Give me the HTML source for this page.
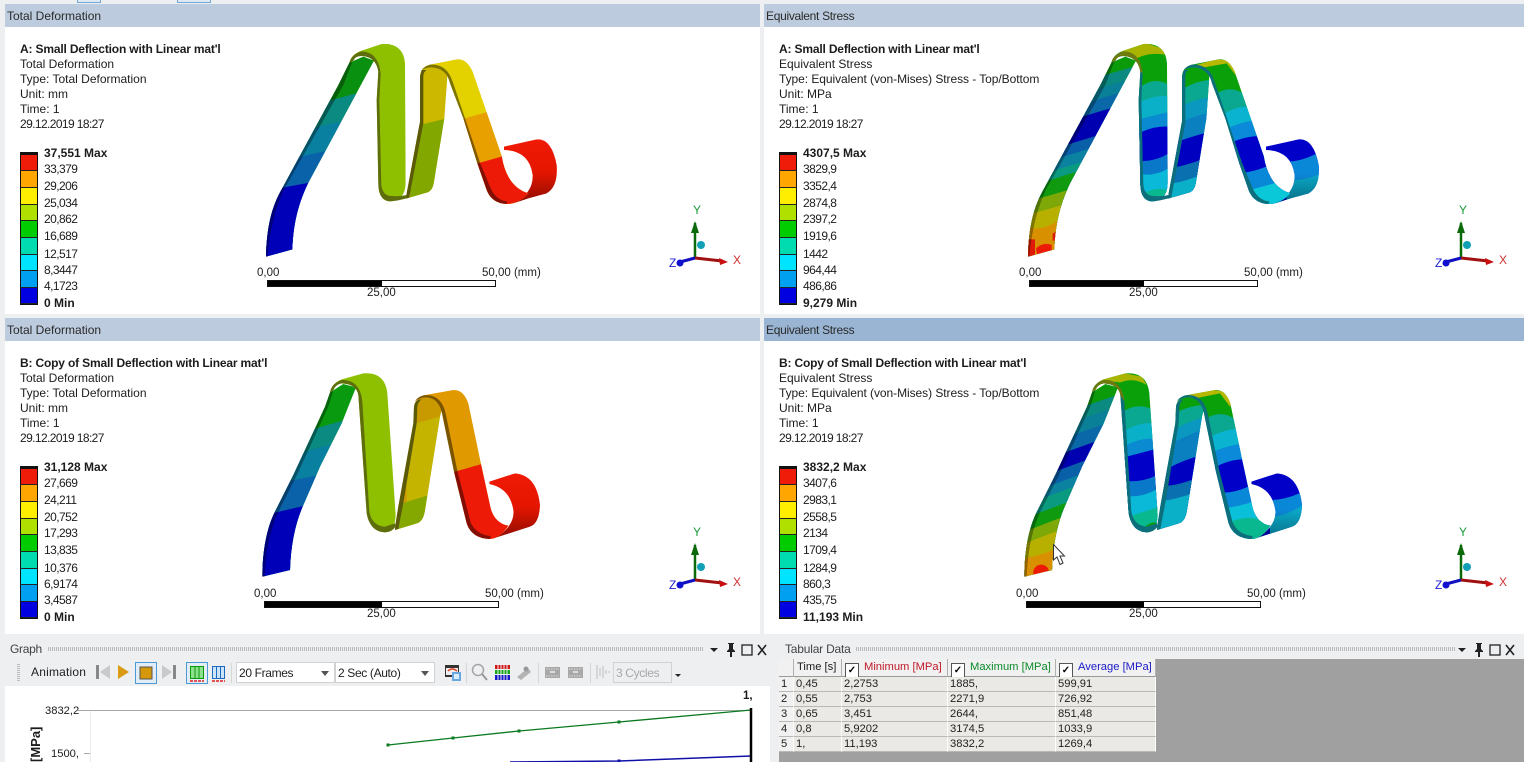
<!DOCTYPE html>
<html><head><meta charset="utf-8">
<style>
html,body{margin:0;padding:0}
body{width:1524px;height:762px;position:relative;overflow:hidden;background:#eeeff1;font-family:"Liberation Sans",sans-serif;color:#1c1c1c}
.a{position:absolute}
.t{position:absolute;white-space:nowrap;font-size:12px;line-height:15px}
.tb{position:absolute;height:23px;line-height:24px;font-size:12px;padding-left:2px;color:#2a2a2a;box-sizing:border-box}
.w{position:absolute;background:#fff}
.an{position:absolute;white-space:nowrap;font-size:12px;line-height:15px}
.an b{letter-spacing:-.17px}
.an u{text-decoration:none;letter-spacing:-.6px}
.an s{text-decoration:none;letter-spacing:-.06px}
.bar{position:absolute;width:16px;border:1px solid #111;border-width:3px 1px 1px;background:#111;box-sizing:content-box}
.bar i{display:block;border-bottom:1px solid #222;box-sizing:border-box}
.lb{position:absolute;font-size:12px;letter-spacing:-.55px;line-height:14px;white-space:nowrap;left:0}
.lb.k{font-weight:bold;font-size:12px;letter-spacing:0}
.sc{position:absolute;height:5px;border:1px solid #111;background:#fff}
.sc i{display:block;height:5px;width:50%;background:#000}
.s{position:absolute;font-size:11.5px;line-height:14px;white-space:nowrap}
svg{position:absolute;overflow:visible}
.cell{position:absolute;font-size:11.2px;line-height:15px;height:15px;white-space:nowrap;padding-left:2px;box-sizing:border-box;color:#222;background:#ebe9e5;border-right:1px solid #fff;border-bottom:1px solid #b9b9b4}
.h{position:absolute;font-size:11.2px;line-height:17px;height:18px;white-space:nowrap;box-sizing:border-box;background:#f1f1f1;border-right:1px solid #b0b0b0;border-bottom:1px solid #9a9a9a;text-align:left}
.cb{display:inline-block;width:12px;height:13px;border:1px solid #555;background:#fff;vertical-align:-3px;margin:0 5px 0 3px;font-size:10px;line-height:13px;text-align:center;color:#000;font-weight:bold}
.dd{position:absolute;top:662px;height:21px;background:#fff;border:1px solid #d2d2d2;box-sizing:border-box;font-size:12px;letter-spacing:-.35px;line-height:20px;padding-left:2px;color:#222}
.dd:after{content:"";position:absolute;right:5px;top:8px;border:4px solid transparent;border-top:5px solid #555}
</style></head><body>

<svg width="0" height="0" style="position:absolute"><defs>
<linearGradient id="rg" x1="0" y1="0" x2="0" y2="1"><stop offset="0" stop-color="#f01a06"/><stop offset=".5" stop-color="#e41600"/><stop offset="1" stop-color="#8a0c00"/></linearGradient>
<linearGradient id="rb" x1="0" y1="0" x2="0" y2="1"><stop offset="0" stop-color="#000"  stop-opacity="0"/><stop offset=".55" stop-color="#000" stop-opacity="0"/><stop offset="1" stop-color="#000" stop-opacity=".35"/></linearGradient>
<clipPath id="a1"><path d="M48 680C50 600 62 535 95 478L265 165 298 98 340 80 372 92 175 458C150 510 130 570 127 658Z"/></clipPath>
<clipPath id="a2"><path d="M298 98Q305 72 335 62L395 42Q460 38 465 100L467 460Q465 512 420 514Q385 512 385 460L380 210 385 125Q378 80 335 78Q315 78 310 92Z"/></clipPath>
<clipPath id="a3"><path d="M468 506L530 488Q548 484 552 455L583 265 592 140Q585 108 545 108Q510 110 510 140V275L470 490Z"/></clipPath>
<clipPath id="a4"><path d="M515 122Q520 110 540 104L620 88Q650 85 668 125L755 378Q770 470 835 490Q805 522 770 522Q725 520 710 480L682 400 640 265 600 160Q590 115 545 112Q525 112 515 122Z"/></clipPath>
<clipPath id="a5"><path d="M762 350L860 328Q905 325 920 405Q925 470 890 490L835 505 790 520Q850 490 848 435Q838 362 762 360Z"/></clipPath>
<path id="ea1" d="M48 680C50 600 62 535 95 478L265 165 298 98 308 92 280 165 104 475C75 535 60 600 52 680Z"/>
<path id="ea2" d="M298 98Q305 72 335 64Q385 66 392 130L388 210 394 465Q398 498 425 498Q450 500 470 495V505Q445 512 420 514Q385 512 385 460L380 210 385 125Q378 80 335 78Q315 78 310 92Z"/>
<path id="ea3" d="M510 140V275L470 490 468 506 478 503 480 490 520 280V140Q520 125 530 120H515Z"/>
<path id="ea4" d="M515 122Q520 110 540 104Q590 100 608 155L690 398 722 475Q740 512 772 514L770 522Q725 520 710 480L682 400 640 265 600 160Q590 115 545 112Q525 112 515 122Z"/>
<clipPath id="b1"><path d="M37 650C38 570 50 505 75 455L130 345 195 205 225 140 240 97 280 72 318 82 275 190 210 320 160 435C135 490 122 560 120 630Z"/></clipPath>
<clipPath id="b2"><path d="M240 97Q245 70 275 58L340 40Q405 35 412 100L437 465Q435 515 405 517Q360 515 350 460L325 105Q320 72 275 70Q258 72 250 90Z"/></clipPath>
<clipPath id="b3"><path d="M435 510L500 490Q520 485 525 450L570 170 575 150Q565 112 530 112Q495 112 492 140L490 190 445 440 437 490Z"/></clipPath>
<clipPath id="b4"><path d="M495 125Q500 112 520 106L610 90Q640 88 655 130L693 312 722 445Q735 490 775 497Q750 535 720 537Q665 535 650 490L612 335 578 170Q570 115 530 112Q508 112 495 125Z"/></clipPath>
<clipPath id="b5"><path d="M718 365L795 340Q860 345 870 435Q868 490 840 500L725 537 750 525Q795 490 790 450Q780 385 718 372Z"/></clipPath>
<path id="eb1" d="M37 650C38 570 50 505 75 455L130 345 195 205 225 140 240 97 250 92 235 140 205 205 140 347 85 455C60 510 48 570 44 650Z"/>
<path id="eb2" d="M240 97Q245 70 275 60Q330 58 337 125L358 455Q366 498 405 500L435 490 437 500Q425 517 405 517Q360 515 350 460L325 105Q320 72 275 70Q258 72 250 90Z"/>
<path id="eb3" d="M492 140L490 190 445 440 437 490 435 510 445 507 448 490 458 440 500 190 502 140Q504 125 515 118Q495 118 492 140Z"/>
<path id="eb4" d="M495 125Q500 112 520 106Q575 100 588 165L622 332 662 488Q680 525 722 528L720 537Q665 535 650 490L612 335 578 170Q570 115 530 112Q508 112 495 125Z"/>
</defs></svg>

<!-- top strip -->
<div class="a" style="left:77px;top:0;width:22px;height:2px;background:#dfe9f4;border:1px solid #6fa8d8;border-top:0"></div>
<div class="a" style="left:177px;top:0;width:32px;height:2px;background:#dfe9f4;border:1px solid #6fa8d8;border-top:0"></div>

<!-- panels -->
<div class="w" style="left:5px;top:27px;width:755px;height:287px"></div>
<div class="w" style="left:764px;top:27px;width:760px;height:287px"></div>
<div class="w" style="left:5px;top:341px;width:755px;height:293px"></div>
<div class="w" style="left:764px;top:341px;width:760px;height:293px"></div>
<div class="tb" style="left:5px;top:4px;width:755px;background:#bccbdd">Total Deformation</div>
<div class="tb" style="left:764px;top:4px;width:760px;background:#bccbdd;letter-spacing:-.3px">Equivalent Stress</div>
<div class="tb" style="left:5px;top:318px;width:755px;background:#bccbdd">Total Deformation</div>
<div class="tb" style="left:764px;top:318px;width:760px;background:#99b5d3;letter-spacing:-.3px">Equivalent Stress</div>

<!-- annotations -->
<div class="an" style="left:20px;top:42px"><b>A: Small Deflection with Linear mat'l</b><br>Total Deformation<br>Type: Total Deformation<br>Unit: mm<br>Time: 1<br><u>29.12.2019 18:27</u></div>
<div class="an" style="left:779px;top:42px"><b>A: Small Deflection with Linear mat'l</b><br>Equivalent Stress<br><s>Type: Equivalent (von-Mises) Stress - Top/Bottom</s><br>Unit: MPa<br>Time: 1<br><u>29.12.2019 18:27</u></div>
<div class="an" style="left:20px;top:356px"><b>B: Copy of Small Deflection with Linear mat'l</b><br>Total Deformation<br>Type: Total Deformation<br>Unit: mm<br>Time: 1<br><u>29.12.2019 18:27</u></div>
<div class="an" style="left:779px;top:356px"><b>B: Copy of Small Deflection with Linear mat'l</b><br>Equivalent Stress<br><s>Type: Equivalent (von-Mises) Stress - Top/Bottom</s><br>Unit: MPa<br>Time: 1<br><u>29.12.2019 18:27</u></div>

<!-- legend bars -->
<div class="bar" style="left:20px;top:152px"><i style="height:16px;background:#ee1c08"></i><i style="height:17px;background:#ffa600"></i><i style="height:17px;background:#ffee00"></i><i style="height:16px;background:#b0e000"></i><i style="height:17px;background:#00cc00"></i><i style="height:17px;background:#00dcb0"></i><i style="height:16px;background:#00e4ff"></i><i style="height:17px;background:#00a0f0"></i><i style="height:16px;background:#0000e0"></i></div>
<div class="bar" style="left:779px;top:152px"><i style="height:16px;background:#ee1c08"></i><i style="height:17px;background:#ffa600"></i><i style="height:17px;background:#ffee00"></i><i style="height:16px;background:#b0e000"></i><i style="height:17px;background:#00cc00"></i><i style="height:17px;background:#00dcb0"></i><i style="height:16px;background:#00e4ff"></i><i style="height:17px;background:#00a0f0"></i><i style="height:16px;background:#0000e0"></i></div>
<div class="bar" style="left:20px;top:466px"><i style="height:16px;background:#ee1c08"></i><i style="height:17px;background:#ffa600"></i><i style="height:17px;background:#ffee00"></i><i style="height:16px;background:#b0e000"></i><i style="height:17px;background:#00cc00"></i><i style="height:17px;background:#00dcb0"></i><i style="height:16px;background:#00e4ff"></i><i style="height:17px;background:#00a0f0"></i><i style="height:16px;background:#0000e0"></i></div>
<div class="bar" style="left:779px;top:466px"><i style="height:16px;background:#ee1c08"></i><i style="height:17px;background:#ffa600"></i><i style="height:17px;background:#ffee00"></i><i style="height:16px;background:#b0e000"></i><i style="height:17px;background:#00cc00"></i><i style="height:17px;background:#00dcb0"></i><i style="height:16px;background:#00e4ff"></i><i style="height:17px;background:#00a0f0"></i><i style="height:16px;background:#0000e0"></i></div>

<!-- legend labels -->
<div class="a" style="left:44px;top:146px">
<div class="lb k" style="top:0">37,551 Max</div><div class="lb" style="top:16px">33,379</div><div class="lb" style="top:33px">29,206</div><div class="lb" style="top:50px">25,034</div><div class="lb" style="top:66px">20,862</div><div class="lb" style="top:83px">16,689</div><div class="lb" style="top:101px">12,517</div><div class="lb" style="top:117px">8,3447</div><div class="lb" style="top:133px">4,1723</div><div class="lb k" style="top:150px">0 Min</div></div>
<div class="a" style="left:803px;top:146px">
<div class="lb k" style="top:0">4307,5 Max</div><div class="lb" style="top:16px">3829,9</div><div class="lb" style="top:33px">3352,4</div><div class="lb" style="top:50px">2874,8</div><div class="lb" style="top:66px">2397,2</div><div class="lb" style="top:83px">1919,6</div><div class="lb" style="top:101px">1442</div><div class="lb" style="top:117px">964,44</div><div class="lb" style="top:133px">486,86</div><div class="lb k" style="top:150px">9,279 Min</div></div>
<div class="a" style="left:44px;top:460px">
<div class="lb k" style="top:0">31,128 Max</div><div class="lb" style="top:16px">27,669</div><div class="lb" style="top:33px">24,211</div><div class="lb" style="top:50px">20,752</div><div class="lb" style="top:66px">17,293</div><div class="lb" style="top:83px">13,835</div><div class="lb" style="top:101px">10,376</div><div class="lb" style="top:117px">6,9174</div><div class="lb" style="top:133px">3,4587</div><div class="lb k" style="top:150px">0 Min</div></div>
<div class="a" style="left:803px;top:460px">
<div class="lb k" style="top:0">3832,2 Max</div><div class="lb" style="top:16px">3407,6</div><div class="lb" style="top:33px">2983,1</div><div class="lb" style="top:50px">2558,5</div><div class="lb" style="top:66px">2134</div><div class="lb" style="top:83px">1709,4</div><div class="lb" style="top:101px">1284,9</div><div class="lb" style="top:117px">860,3</div><div class="lb" style="top:133px">435,75</div><div class="lb k" style="top:150px">11,193 Min</div></div>

<!-- Shape: total A -->
<svg style="left:250px;top:30px" width="320" height="270" viewBox="0 0 960 810">
<g clip-path="url(#a1)"><rect width="960" height="810" fill="#0a9010"/>
<path d="M0 276L500 141V810H0Z" fill="#0a8a80"/><path d="M0 337L500 222V810H0Z" fill="#0a80a0"/><path d="M0 412L500 305V810H0Z" fill="#0a62a8"/><path d="M0 491L500 398V810H0Z" fill="#0000b8"/></g>
<use href="#ea1" fill="#000" opacity=".35"/>
<g clip-path="url(#a3)"><rect width="960" height="810" fill="#cdb800"/><path d="M480 292L620 258V810H480Z" fill="#82a800"/></g>
<use href="#ea3" fill="#5a5a08"/>
<g clip-path="url(#a2)"><rect width="960" height="810" fill="#8fc000"/></g>
<use href="#ea2" fill="#5f6e0c"/>
<g clip-path="url(#a5)"><rect x="760" y="328" width="165" height="195" fill="url(#rg)"/></g>
<g clip-path="url(#a4)"><rect width="960" height="810" fill="#e3d100"/><path d="M600 278L960 175V810H600Z" fill="#e89f00"/><path d="M640 412L960 322V810H640Z" fill="#ee1a08"/></g>
<use href="#ea4" fill="#000" opacity=".45"/>
</svg>

<!-- Shape: total B -->
<svg style="left:250px;top:360px" width="320" height="270" viewBox="0 0 960 810">
<g clip-path="url(#b1)"><rect width="960" height="810" fill="#0a9a10"/>
<path d="M0 262L500 118V810H0Z" fill="#0a8a80"/><path d="M0 325L500 175V810H0Z" fill="#0a80a0"/><path d="M0 385L500 290V810H0Z" fill="#0a62a8"/><path d="M0 475L500 360V810H0Z" fill="#0000b8"/></g>
<use href="#eb1" fill="#000" opacity=".35"/>
<g clip-path="url(#b3)"><rect width="960" height="810" fill="#c99a00"/><path d="M470 198L620 155V810H470Z" fill="#c4b400"/><path d="M430 438L560 398V810H430Z" fill="#84a800"/></g>
<use href="#eb3" fill="#5a5a08"/>
<g clip-path="url(#b2)"><rect width="960" height="810" fill="#8fc000"/></g>
<use href="#eb2" fill="#5f6e0c"/>
<g clip-path="url(#b5)"><rect x="715" y="340" width="160" height="200" fill="url(#rg)"/></g>
<g clip-path="url(#b4)"><rect width="960" height="810" fill="#e09a00"/><path d="M590 342L960 237V810H590Z" fill="#ee1a08"/></g>
<use href="#eb4" fill="#000" opacity=".45"/>
</svg>

<!-- Shape: stress A -->
<svg style="left:1010px;top:30px" width="320" height="270" viewBox="0 0 960 810">
<g transform="translate(6 0)" clip-path="url(#a1)"><g transform="translate(-6 0)"><rect width="960" height="810" fill="#0a9a0a"/>
<path d="M0 225Q250 140 500 75V810H0Z" fill="#0a8a80"/><path d="M0 260Q250 175 500 110V810H0Z" fill="#0a7f98"/><path d="M0 292Q250 207 500 142V810H0Z" fill="#0a68a8"/><path d="M0 330Q250 245 500 180V810H0Z" fill="#0000b0"/><path d="M0 400Q250 315 500 250V810H0Z" fill="#0a60a8"/><path d="M0 432Q250 347 500 282V810H0Z" fill="#0a82a0"/><path d="M0 465Q250 380 500 315V810H0Z" fill="#0a9a80"/><path d="M0 490Q250 405 500 340V810H0Z" fill="#109a10"/><path d="M0 527Q120 500 300 440V810H0Z" fill="#7ea808"/><path d="M0 566Q120 540 300 480V810H0Z" fill="#b8b000"/><path d="M40 590Q100 610 160 560V810H40Z" fill="#d89000"/>
<path d="M50 628H75V685H50Z" fill="#e01a08"/><path d="M78 655Q100 635 125 645V668L82 678Z" fill="#ee1a08"/><path d="M128 610L140 605V632H128Z" fill="#e01a08"/></g></g>
<g transform="translate(6 0)"><use href="#ea1" fill="#000" opacity=".32"/></g>
<g transform="translate(6 0)" clip-path="url(#a3)"><g transform="translate(-6 0)"><rect width="960" height="810" fill="#0aa00a"/>
<path d="M500 190Q550 150 620 148V810H500Z" fill="#0aa890"/><path d="M500 238Q550 205 620 200V810H500Z" fill="#0a98c0"/><path d="M500 284Q550 255 620 245V810H500Z" fill="#0a80c0"/><path d="M490 340Q540 320 620 300V810H490Z" fill="#0000c0"/><path d="M470 415Q530 410 620 370V810H470Z" fill="#0a70b0"/><path d="M470 462Q520 460 620 415V810H470Z" fill="#0ab0c8"/></g></g>
<g transform="translate(6 0)"><use href="#ea3" fill="#0d6e7c"/></g>
<g transform="translate(6 0)" clip-path="url(#a2)"><g transform="translate(-6 0)"><rect width="960" height="810" fill="#0aa00a"/><path d="M320 60L410 40 470 60V75Q420 65 380 85Z" fill="#a8b400"/>
<path d="M370 188Q430 130 480 168V810H370Z" fill="#0aa890"/><path d="M370 228Q430 190 480 200V810H370Z" fill="#0ab0c8"/><path d="M370 272L480 245V810H370Z" fill="#0a8ad0"/><path d="M370 318Q430 285 480 290V810H370Z" fill="#0000c8"/><path d="M370 392Q430 400 480 368V810H370Z" fill="#0a78c8"/><path d="M370 428Q430 445 480 412V810H370Z" fill="#0ab8d8"/><path d="M400 490Q440 470 470 480V520H400Z" fill="#0ab890"/></g></g>
<g transform="translate(6 0)"><use href="#ea2" fill="#0d6e7c"/><path d="M298 98Q305 72 335 64Q385 66 392 130L385 125Q378 80 335 78Q315 78 310 92Z" fill="#6e7a0c"/></g>
<g transform="translate(6 0)" clip-path="url(#a5)"><g transform="translate(-6 0)"><rect x="760" y="320" width="175" height="200" fill="#0000c8"/><path d="M830 395Q880 395 940 360V530H830Z" fill="#0a88d8"/><path d="M830 450Q880 455 940 428V530H830Z" fill="#0aa8c8"/><rect x="760" y="320" width="175" height="200" fill="url(#rb)"/></g></g>
<g transform="translate(6 0)" clip-path="url(#a4)"><g transform="translate(-6 0)"><rect width="960" height="810" fill="#0aa00a"/><path d="M540 110L620 88 660 92 685 130 680 140 650 100 560 116Z" fill="#b8b800"/>
<path d="M600 205Q650 160 700 190H960V810H600Z" fill="#0aa890"/><path d="M620 268Q670 225 730 230H960V810H620Z" fill="#0ab4d0"/><path d="M630 305Q690 275 750 268H960V810H630Z" fill="#0a8ad8"/><path d="M640 350Q700 315 770 318H960V810H640Z" fill="#0000c8"/><path d="M670 430Q730 430 790 400H960V810H670Z" fill="#0a88d8"/><path d="M700 485Q760 470 810 455H960V810H700Z" fill="#0ac8d8"/></g></g>
<g transform="translate(6 0)"><use href="#ea4" fill="#0d6e7c"/></g>
</svg>

<!-- Shape: stress B -->
<svg style="left:1010px;top:360px" width="320" height="270" viewBox="0 0 960 810">
<g transform="translate(6 0)" clip-path="url(#b1)"><g transform="translate(-6 0)"><rect width="960" height="810" fill="#0a9a0a"/>
<path d="M0 226Q250 120 500 51V810H0Z" fill="#0a8a80"/><path d="M0 261Q250 155 500 86V810H0Z" fill="#0a7f98"/><path d="M0 300Q250 195 500 125V810H0Z" fill="#0a68a8"/><path d="M0 343Q250 238 500 168V810H0Z" fill="#0000b0"/><path d="M0 389Q250 284 500 214V810H0Z" fill="#0a60a8"/><path d="M0 426Q250 320 500 251V810H0Z" fill="#0a82a0"/><path d="M0 455Q250 350 500 280V810H0Z" fill="#0a9a80"/><path d="M0 494Q250 390 500 319V810H0Z" fill="#109a10"/><path d="M0 533Q250 430 500 358V810H0Z" fill="#7ea808"/><path d="M0 569Q250 465 500 394V810H0Z" fill="#b8b000"/><path d="M0 603Q100 590 200 540V810H0Z" fill="#d89000"/>
<path d="M71 645A23 23 0 0 1 116 630V640Z" fill="#ee1a08"/></g></g>
<g transform="translate(6 0)"><use href="#eb1" fill="#000" opacity=".32"/></g>
<g transform="translate(6 0)" clip-path="url(#b3)"><g transform="translate(-6 0)"><rect width="960" height="810" fill="#0aa00a"/>
<path d="M480 170Q530 135 590 135V810H480Z" fill="#0aa890"/><path d="M470 222Q530 185 590 168V810H470Z" fill="#0a98c0"/><path d="M465 260Q530 225 590 205V810H465Z" fill="#0a80c0"/><path d="M450 340Q510 300 590 282V810H450Z" fill="#0000c0"/><path d="M450 378Q510 380 590 340V810H450Z" fill="#0a70b0"/><path d="M440 425Q500 420 590 385V810H440Z" fill="#0ab0c8"/></g></g>
<g transform="translate(6 0)"><use href="#eb3" fill="#0d6e7c"/></g>
<g transform="translate(6 0)" clip-path="url(#b2)"><g transform="translate(-6 0)"><rect width="960" height="810" fill="#0aa00a"/><path d="M260 62L345 40 395 50 410 75Q370 50 330 68 300 60 270 75Z" fill="#a8b400"/>
<path d="M320 170Q375 120 430 150V810H320Z" fill="#0aa890"/><path d="M325 228Q375 185 430 190V810H325Z" fill="#0ab0c8"/><path d="M330 265Q380 235 430 235V810H330Z" fill="#0a8ad0"/><path d="M330 295L445 265V810H330Z" fill="#0000c8"/><path d="M340 362Q400 370 450 340V810H340Z" fill="#0a78c8"/><path d="M340 408Q400 415 450 382V810H340Z" fill="#0ab8d8"/><path d="M350 472Q400 455 450 440V530H350Z" fill="#0ab890"/><path d="M400 505Q425 480 445 490V520H400Z" fill="#0a9a10"/></g></g>
<g transform="translate(6 0)"><use href="#eb2" fill="#0d6e7c"/><path d="M240 97Q245 70 275 60Q330 58 337 125L325 105Q320 72 275 70Q258 72 250 90Z" fill="#6e7a0c"/></g>
<g transform="translate(6 0)" clip-path="url(#b5)"><g transform="translate(-6 0)"><rect x="715" y="335" width="170" height="205" fill="#0000c8"/><path d="M780 420Q830 420 885 392V540H780Z" fill="#0a88d8"/><path d="M780 470Q830 470 885 430V540H780Z" fill="#0aa8c8"/><rect x="715" y="335" width="170" height="205" fill="url(#rb)"/></g></g>
<g transform="translate(6 0)" clip-path="url(#b4)"><g transform="translate(-6 0)"><rect width="960" height="810" fill="#0aa00a"/><path d="M520 108L610 90 645 95 665 130 660 140 630 100 540 118Z" fill="#b8b800"/>
<path d="M570 190Q625 140 680 180H960V810H570Z" fill="#0aa890"/><path d="M590 238Q640 205 700 205H960V810H590Z" fill="#0ab4d0"/><path d="M600 280Q650 255 705 250H960V810H600Z" fill="#0a8ad8"/><path d="M610 325Q660 295 715 298H960V810H610Z" fill="#0000c8"/><path d="M630 398Q680 400 730 372H960V810H630Z" fill="#0a88d8"/><path d="M640 445Q690 440 750 418H960V810H640Z" fill="#0ac0d8"/><path d="M640 495Q720 455 770 490H960V545H640Z" fill="#0ab890"/></g></g>
<g transform="translate(6 0)"><use href="#eb4" fill="#0d6e7c"/></g>
</svg>

<!-- cursor -->
<svg style="left:1053px;top:544px" width="13" height="23" viewBox="0 0 13 23"><path d="M.5.5V16L4 13 7 20.5 10 19 7 12H11.5Z" fill="#fff" stroke="#333" stroke-width="1"/></svg>

<!-- scale bars -->
<div class="sc" style="left:267px;top:280px;width:227px"><i></i></div>
<div class="s" style="left:257px;top:266px">0,00</div><div class="s" style="left:482px;top:266px">50,00 (mm)</div><div class="s" style="left:367px;top:286px">25,00</div>
<div class="sc" style="left:1029px;top:280px;width:227px"><i></i></div>
<div class="s" style="left:1019px;top:266px">0,00</div><div class="s" style="left:1244px;top:266px">50,00 (mm)</div><div class="s" style="left:1129px;top:286px">25,00</div>
<div class="sc" style="left:264px;top:601px;width:233px"><i></i></div>
<div class="s" style="left:254px;top:587px">0,00</div><div class="s" style="left:485px;top:587px">50,00 (mm)</div><div class="s" style="left:367px;top:607px">25,00</div>
<div class="sc" style="left:1026px;top:601px;width:233px"><i></i></div>
<div class="s" style="left:1016px;top:587px">0,00</div><div class="s" style="left:1247px;top:587px">50,00 (mm)</div><div class="s" style="left:1129px;top:607px">25,00</div>

<!-- triads -->
<svg style="left:660px;top:200px" width="90" height="75"><g><path d="M35 23V58" stroke="#0a6a0a" stroke-width="2.500"/><path d="M35 21L39 33H31Z" fill="#0a6a0a"/><path d="M35 58L62 61" stroke="#a01010" stroke-width="3"/><path d="M68 62L59 58 60 65Z" fill="#c81010"/><path d="M35 58L20 62" stroke="#1010c0" stroke-width="3"/><circle cx="20" cy="63" r="3.500" fill="#1010d0"/><circle cx="41" cy="45" r="4" fill="#12a0b8"/><text x="33" y="14" font-size="12" fill="#1a9a3a" font-family="Liberation Sans">Y</text><text x="73" y="64" font-size="12" fill="#d03030" font-family="Liberation Sans">X</text><text x="9" y="67" font-size="12" fill="#2020d0" font-family="Liberation Sans">Z</text></g></svg>
<svg style="left:1426px;top:200px" width="90" height="75"><g><path d="M35 23V58" stroke="#0a6a0a" stroke-width="2.500"/><path d="M35 21L39 33H31Z" fill="#0a6a0a"/><path d="M35 58L62 61" stroke="#a01010" stroke-width="3"/><path d="M68 62L59 58 60 65Z" fill="#c81010"/><path d="M35 58L20 62" stroke="#1010c0" stroke-width="3"/><circle cx="20" cy="63" r="3.500" fill="#1010d0"/><circle cx="41" cy="45" r="4" fill="#12a0b8"/><text x="33" y="14" font-size="12" fill="#1a9a3a" font-family="Liberation Sans">Y</text><text x="73" y="64" font-size="12" fill="#d03030" font-family="Liberation Sans">X</text><text x="9" y="67" font-size="12" fill="#2020d0" font-family="Liberation Sans">Z</text></g></svg>
<svg style="left:660px;top:522px" width="90" height="75"><g><path d="M35 23V58" stroke="#0a6a0a" stroke-width="2.500"/><path d="M35 21L39 33H31Z" fill="#0a6a0a"/><path d="M35 58L62 61" stroke="#a01010" stroke-width="3"/><path d="M68 62L59 58 60 65Z" fill="#c81010"/><path d="M35 58L20 62" stroke="#1010c0" stroke-width="3"/><circle cx="20" cy="63" r="3.500" fill="#1010d0"/><circle cx="41" cy="45" r="4" fill="#12a0b8"/><text x="33" y="14" font-size="12" fill="#1a9a3a" font-family="Liberation Sans">Y</text><text x="73" y="64" font-size="12" fill="#d03030" font-family="Liberation Sans">X</text><text x="9" y="67" font-size="12" fill="#2020d0" font-family="Liberation Sans">Z</text></g></svg>
<svg style="left:1426px;top:522px" width="90" height="75"><g><path d="M35 23V58" stroke="#0a6a0a" stroke-width="2.500"/><path d="M35 21L39 33H31Z" fill="#0a6a0a"/><path d="M35 58L62 61" stroke="#a01010" stroke-width="3"/><path d="M68 62L59 58 60 65Z" fill="#c81010"/><path d="M35 58L20 62" stroke="#1010c0" stroke-width="3"/><circle cx="20" cy="63" r="3.500" fill="#1010d0"/><circle cx="41" cy="45" r="4" fill="#12a0b8"/><text x="33" y="14" font-size="12" fill="#1a9a3a" font-family="Liberation Sans">Y</text><text x="73" y="64" font-size="12" fill="#d03030" font-family="Liberation Sans">X</text><text x="9" y="67" font-size="12" fill="#2020d0" font-family="Liberation Sans">Z</text></g></svg>

<!-- Graph panel -->
<div class="t" style="left:10px;top:642px;color:#444;letter-spacing:-.3px">Graph</div>
<div class="a" style="left:48px;top:647px;width:655px;height:4px;background:repeating-linear-gradient(90deg,#b8b8b8 0 1px,transparent 1px 2px)"></div>
<svg style="left:706px;top:642px" width="64" height="16"><path d="M4 6H12L8 10Z" fill="#222"/><path d="M22 1H28V2H27V7L29 9V10H26V15H24V10H21V9L23 7V2H22Z" fill="#222"/><rect x="36" y="3" width="10" height="10" fill="none" stroke="#222" stroke-width="1.300"/><path d="M52 3L60 13M60 3L52 13" stroke="#222" stroke-width="1.600"/></svg>
<div class="t" style="left:31px;top:665px;color:#222;letter-spacing:.2px">Animation</div>
<div class="a" style="left:17px;top:664px;width:3px;height:17px;background:repeating-linear-gradient(180deg,#bbb 0 1px,transparent 1px 2px)"></div>
<svg style="left:90px;top:660px" width="600" height="26">
<rect x="6" y="5" width="3" height="14" fill="#888"/><path d="M20 5V19L10 12Z" fill="#c9c9c9"/>
<path d="M28 5L39 12 28 19Z" fill="#d99a14"/>
<rect x="45.500" y="2.500" width="21" height="21" fill="#e2edf8" stroke="#4a9ad8"/><rect x="50" y="7" width="12" height="12" fill="#d4980a" stroke="#555"/>
<path d="M72 5V19L82 12Z" fill="#c9c9c9"/><rect x="83" y="5" width="3" height="14" fill="#888"/>
<rect x="96.500" y="2.500" width="21" height="21" fill="#e2edf8" stroke="#4a9ad8"/>
<path d="M100.500 6.500H113.500V18.500H100.500ZM105 6.500V18.500M109 6.500V18.500" fill="#8de08d" stroke="#0a9a0a"/><path d="M100 21H114" stroke="#e02020" stroke-width="1.500" stroke-dasharray="3 1"/>
<path d="M122.500 6.500H134.500V18.500H122.500ZM126.500 6.500V18.500M130.500 6.500V18.500" fill="#cde4f8" stroke="#1a6ac0"/><path d="M122 21H135" stroke="#e02020" stroke-width="1.500" stroke-dasharray="3 1"/>
<path d="M141.500 3V23" stroke="#d6d6d6"/>
<rect x="355" y="5" width="14" height="12" fill="#333"/><rect x="356" y="8" width="12" height="7" fill="#eee"/><path d="M358 11Q362 7 367 11" stroke="#e04020" fill="none" stroke-width="1.500"/><rect x="362" y="12" width="9" height="9" fill="#6aa8e0"/><rect x="364" y="14" width="5" height="5" fill="#d8ecfa"/>
<path d="M376.500 3V23" stroke="#d6d6d6"/>
<circle cx="388" cy="10" r="5.500" fill="#eef0f4" stroke="#a5a5a5" stroke-width="1.500"/><path d="M392 14L397 20" stroke="#999" stroke-width="2"/>
<g><rect x="405" y="5" width="15" height="4" fill="#d01818"/><rect x="405" y="10" width="15" height="4" fill="#18a818"/><rect x="405" y="15" width="15" height="5" fill="#1818c8"/><path d="M408 5V20M411 5V20M414 5V20M417 5V20" stroke="#eef0f4"/></g>
<path d="M427 17L438 8 441 12 431 20Z" fill="#b4b4b4"/><circle cx="436" cy="9" r="2.500" fill="#999"/>
<path d="M448.500 3V23" stroke="#d6d6d6"/>
<rect x="455" y="7" width="15" height="11" fill="#a8a8a8"/><path d="M456 9H469M456 16H469" stroke="#ddd" stroke-dasharray="1.500 1"/><rect x="460" y="11" width="5" height="2" fill="#ddd"/>
<rect x="478" y="7" width="15" height="11" fill="#a8a8a8"/><path d="M479 9H492M479 16H492" stroke="#ddd" stroke-dasharray="1.500 1"/><rect x="483" y="11" width="5" height="2" fill="#ddd"/>
<path d="M500.500 3V23" stroke="#d6d6d6"/>
<path d="M507 5V19M510 8V16M513 6V18M516 10V14M519 11V13" stroke="#bdbdbd"/>
<path d="M585 14H591L588 17Z" fill="#222"/>
</svg>
<div class="dd" style="left:236px;width:99px">20 Frames</div>
<div class="dd" style="left:335px;width:100px">2 Sec (Auto)</div>
<div class="a" style="left:613px;top:662px;width:59px;height:21px;border:1px solid #d2d2d2;box-sizing:border-box;font-size:12px;letter-spacing:-.35px;line-height:20px;padding-left:2px;color:#a8a8a8">3 Cycles</div>

<div class="w" style="left:5px;top:686px;width:765px;height:76px"></div>
<div class="a" style="left:78px;top:710px;width:674px;height:1px;background:#a8a8a8"></div>
<div class="a" style="left:90px;top:711px;width:1px;height:51px;background:#ececec"></div>
<div class="a" style="left:84px;top:753px;width:6px;height:1px;background:#a8a8a8"></div>
<div class="s" style="left:45px;top:704px;font-size:11.2px">3832,2</div>
<div class="s" style="left:51px;top:747px;font-size:11.2px">1500,</div>
<div class="s" style="left:743px;top:689px;font-size:11.500px;font-weight:bold">1,</div>
<div class="a" style="left:16px;top:735px;width:40px;height:14px;font:bold 13px/14px 'Liberation Sans',sans-serif;transform:rotate(-90deg);text-align:left;white-space:nowrap">[MPa]</div>
<svg style="left:380px;top:700px" width="380" height="62"><path d="M8 45L73 38 139 31 239 22 371 10" fill="none" stroke="#0a7a20" stroke-width="1.300"/><path d="M130 62L239 61 371 56" fill="none" stroke="#1010a8" stroke-width="1.500"/><g fill="#0a7a20"><rect x="6.500" y="43.500" width="3" height="3"/><rect x="71.500" y="36.500" width="3" height="3"/><rect x="137.500" y="29.500" width="3" height="3"/><rect x="237.500" y="20.500" width="3" height="3"/></g><rect x="237.500" y="59.500" width="3" height="3" fill="#1010a8"/><path d="M371 8V62" stroke="#000" stroke-width="2.500"/></svg>

<!-- Tabular -->
<div class="t" style="left:785px;top:642px;color:#444;letter-spacing:-.2px">Tabular Data</div>
<div class="a" style="left:856px;top:647px;width:600px;height:4px;background:repeating-linear-gradient(90deg,#b8b8b8 0 1px,transparent 1px 2px)"></div>
<svg style="left:1454px;top:642px" width="64" height="16"><path d="M4 6H12L8 10Z" fill="#222"/><path d="M22 1H28V2H27V7L29 9V10H26V15H24V10H21V9L23 7V2H22Z" fill="#222"/><rect x="36" y="3" width="10" height="10" fill="none" stroke="#222" stroke-width="1.300"/><path d="M52 3L60 13M60 3L52 13" stroke="#222" stroke-width="1.600"/></svg>
<div class="a" style="left:779px;top:659px;width:745px;height:103px;background:#a0a0a0"></div>
<div class="h" style="left:779px;top:659px;width:15px"></div>
<div class="h" style="left:794px;top:659px;width:48px;padding-left:3px">Time [s]</div>
<div class="h" style="left:842px;top:659px;width:106px"><span class="cb">✓</span><span style="color:#c01828">Minimum [MPa]</span></div>
<div class="h" style="left:948px;top:659px;width:108px"><span class="cb">✓</span><span style="color:#0a8a2a">Maximum [MPa]</span></div>
<div class="h" style="left:1056px;top:659px;width:100px"><span class="cb">✓</span><span style="color:#1a1ac8">Average [MPa]</span></div>

<div class="cell" style="left:779px;top:677px;width:15px;background:#f1f1f1">1</div><div class="cell" style="left:794px;top:677px;width:48px">0,45</div><div class="cell" style="left:842px;top:677px;width:106px">2,2753</div><div class="cell" style="left:948px;top:677px;width:108px">1885,</div><div class="cell" style="left:1056px;top:677px;width:100px">599,91</div>
<div class="cell" style="left:779px;top:692px;width:15px;background:#f1f1f1">2</div><div class="cell" style="left:794px;top:692px;width:48px">0,55</div><div class="cell" style="left:842px;top:692px;width:106px">2,753</div><div class="cell" style="left:948px;top:692px;width:108px">2271,9</div><div class="cell" style="left:1056px;top:692px;width:100px">726,92</div>
<div class="cell" style="left:779px;top:707px;width:15px;background:#f1f1f1">3</div><div class="cell" style="left:794px;top:707px;width:48px">0,65</div><div class="cell" style="left:842px;top:707px;width:106px">3,451</div><div class="cell" style="left:948px;top:707px;width:108px">2644,</div><div class="cell" style="left:1056px;top:707px;width:100px">851,48</div>
<div class="cell" style="left:779px;top:722px;width:15px;background:#f1f1f1">4</div><div class="cell" style="left:794px;top:722px;width:48px">0,8</div><div class="cell" style="left:842px;top:722px;width:106px">5,9202</div><div class="cell" style="left:948px;top:722px;width:108px">3174,5</div><div class="cell" style="left:1056px;top:722px;width:100px">1033,9</div>
<div class="cell" style="left:779px;top:737px;width:15px;background:#f1f1f1">5</div><div class="cell" style="left:794px;top:737px;width:48px">1,</div><div class="cell" style="left:842px;top:737px;width:106px">11,193</div><div class="cell" style="left:948px;top:737px;width:108px">3832,2</div><div class="cell" style="left:1056px;top:737px;width:100px">1269,4</div>

</body></html>
